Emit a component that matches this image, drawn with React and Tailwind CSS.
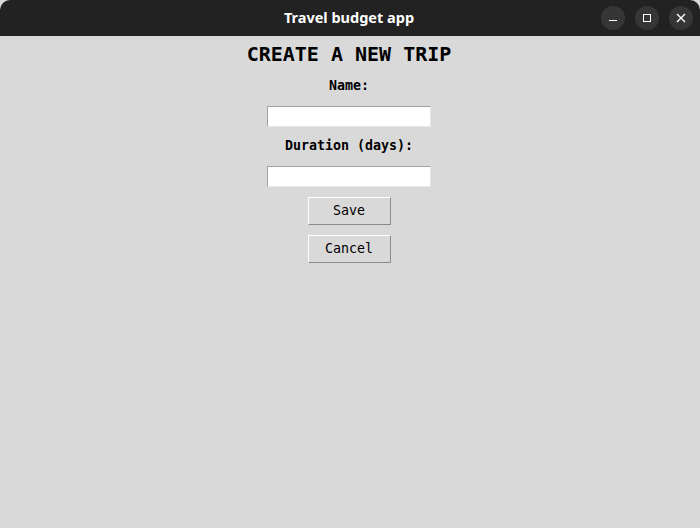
export default function App() {
  const mono = { fontFamily: '"DejaVu Sans Mono", "Liberation Mono", monospace' }

  return (
    <div className="w-[700px] h-[528px] flex flex-col bg-[#d9d9d9] overflow-hidden">
      <div className="h-9 shrink-0 bg-[#222222] rounded-t-[10px] flex items-center relative">
        <div
          className="flex-1 text-center text-white text-[14.5px] font-bold pr-[2px]"
          style={{ fontFamily: '"Noto Sans", "Open Sans", sans-serif' }}
        >
          Travel budget app
        </div>
        <div className="absolute right-[7px] top-[6px] flex gap-[10px]">
          <button className="w-6 h-6 rounded-full bg-[#363636] flex items-center justify-center">
            <span className="block w-[8px] h-[1.5px] bg-white mt-[5px]" />
          </button>
          <button className="w-6 h-6 rounded-full bg-[#363636] flex items-center justify-center">
            <span className="block w-[8px] h-[8px] border border-white" />
          </button>
          <button className="w-6 h-6 rounded-full bg-[#363636] flex items-center justify-center">
            <svg width="10" height="10" viewBox="0 0 10 10">
              <path d="M1 1 L9 9 M9 1 L1 9" stroke="white" strokeWidth="1.4" />
            </svg>
          </button>
        </div>
      </div>

      <div className="flex flex-col items-center pt-[6px] pr-[2px]" style={mono}>
        <h1 className="text-[20px] leading-[24px] font-bold text-black">CREATE A NEW TRIP</h1>

        <label className="mt-[11px] text-[13.3px] leading-[18px] font-bold text-black">Name:</label>
        <input
          type="text"
          className="mt-[11px] w-[164px] h-[21px] bg-white border border-t-[#a0a0a0] border-l-[#a0a0a0] border-r-[#e8e8e8] border-b-[#e8e8e8] outline-none"
        />

        <label className="mt-[10px] text-[13.3px] leading-[18px] font-bold text-black">Duration (days):</label>
        <input
          type="text"
          className="mt-[11px] w-[164px] h-[21px] bg-white border border-t-[#a0a0a0] border-l-[#a0a0a0] border-r-[#e8e8e8] border-b-[#e8e8e8] outline-none"
        />

        <button className="mt-[10px] w-[83px] h-[28px] bg-[#d9d9d9] border border-t-white border-l-white border-r-[#8a8a8a] border-b-[#8a8a8a] text-[13.3px] text-black">
          Save
        </button>
        <button className="mt-[10px] w-[83px] h-[28px] bg-[#d9d9d9] border border-t-white border-l-white border-r-[#8a8a8a] border-b-[#8a8a8a] text-[13.3px] text-black">
          Cancel
        </button>
      </div>
    </div>
  )
}
